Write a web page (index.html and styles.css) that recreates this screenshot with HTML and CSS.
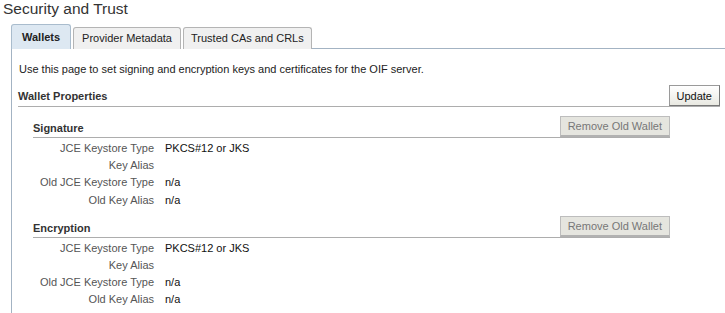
FILE: index.html
```html
<!DOCTYPE html>
<html lang="en">
<head>
    <meta charset="UTF-8">
    <title>Security and Trust</title>
    <link rel="stylesheet" href="styles.css">
</head>
<body>
    <h1 class="page-title">Security and Trust</h1>

    <div class="tab-bar">
        <div class="tab tab-active">Wallets</div>
        <div class="tab">Provider Metadata</div>
        <div class="tab tab-last">Trusted CAs and CRLs</div>
        <div class="tab-rest"></div>
    </div>

    <div class="tab-panel">
        <p class="intro">Use this page to set signing and encryption keys and certificates for the OIF server.</p>

        <div class="section-head">
            <span class="section-title">Wallet Properties</span>
            <button class="btn">Update</button>
        </div>

        <div class="sub-section">
            <div class="sub-head">
                <span class="sub-title">Signature</span>
                <button class="btn btn-disabled" disabled>Remove Old Wallet</button>
            </div>
            <div class="props">
                <span class="prop-label">JCE Keystore Type</span><span class="prop-value">PKCS#12 or JKS</span>
                <span class="prop-label">Key Alias</span><span class="prop-value"></span>
                <span class="prop-label">Old JCE Keystore Type</span><span class="prop-value">n/a</span>
                <span class="prop-label">Old Key Alias</span><span class="prop-value">n/a</span>
            </div>
        </div>

        <div class="sub-section">
            <div class="sub-head">
                <span class="sub-title">Encryption</span>
                <button class="btn btn-disabled" disabled>Remove Old Wallet</button>
            </div>
            <div class="props">
                <span class="prop-label">JCE Keystore Type</span><span class="prop-value">PKCS#12 or JKS</span>
                <span class="prop-label">Key Alias</span><span class="prop-value"></span>
                <span class="prop-label">Old JCE Keystore Type</span><span class="prop-value">n/a</span>
                <span class="prop-label">Old Key Alias</span><span class="prop-value">n/a</span>
            </div>
        </div>
    </div>
</body>
</html>
```

FILE: styles.css
```css
body {
    margin: 0;
    font-family: "Liberation Sans", Arial, sans-serif;
    font-size: 11px;
    color: #000;
    background-color: #fff;
}

.page-title {
    margin: 0;
    padding: 0 0 0 3px;
    height: 24px;
    line-height: 17px;
    font-size: 15.5px;
    font-weight: normal;
    color: #333;
}

/* tabs */
.tab-bar {
    display: flex;
    align-items: flex-end;
    margin-left: 11px;
    height: 25px;
}

.tab {
    height: 21px;
    line-height: 21px;
    padding: 0 8px;
    margin-right: 2px;
    background-color: #f0f0f0;
    border: 1px solid #b4b4b4;
    border-bottom: none;
    border-radius: 3px 3px 0 0;
    color: #222;
}

.tab-last {
    padding: 0 7px;
}

.tab-active {
    height: 24px;
    line-height: 24px;
    padding: 0 10px;
    background-color: #dde8f2;
    border-color: #a9bccd;
    font-weight: bold;
}

.tab-rest {
    flex: 1;
    border-bottom: 1px solid #a3b3c3;
    margin-left: -2px;
}

.tab-panel {
    margin-left: 11px;
    border-left: 1px solid #a3b3c3;
    padding: 0 5px 6px 7px;
}

.intro {
    margin: 0;
    padding-top: 14px;
    height: 22px;
    color: #222;
}

/* section headers */
.section-head,
.sub-head {
    display: flex;
    justify-content: space-between;
    align-items: center;
    border-bottom: 1px solid #adadad;
}

.section-head {
    margin-left: -1px;
}

.section-title,
.sub-title {
    font-weight: bold;
    color: #333;
}

.sub-section {
    margin: 9px 50px 0 14px;
}

.sub-section + .sub-section {
    margin-top: 7px;
}

.sub-title {
    padding-top: 3px;
}

.btn {
    height: 21px;
    padding: 0 7px;
    font-family: "Liberation Sans", Arial, sans-serif;
    font-size: 11px;
    color: #111;
    background: linear-gradient(#ffffff, #e9e9e2);
    border: 1px solid #9a9a9a;
    border-right-color: #777;
    border-bottom-color: #777;
    border-radius: 0;
}

.btn-disabled {
    color: #777;
    background: #e5e5df;
    border: 1px solid #bdbdbd;
    border-bottom: 2px solid #b1b1b1;
}

/* property rows */
.props {
    display: grid;
    grid-template-columns: 121px 1fr;
    column-gap: 11px;
    padding-top: 2px;
    line-height: 17.2px;
}

.prop-label {
    text-align: right;
    color: #555;
}

.prop-value {
    color: #111;
}
```
